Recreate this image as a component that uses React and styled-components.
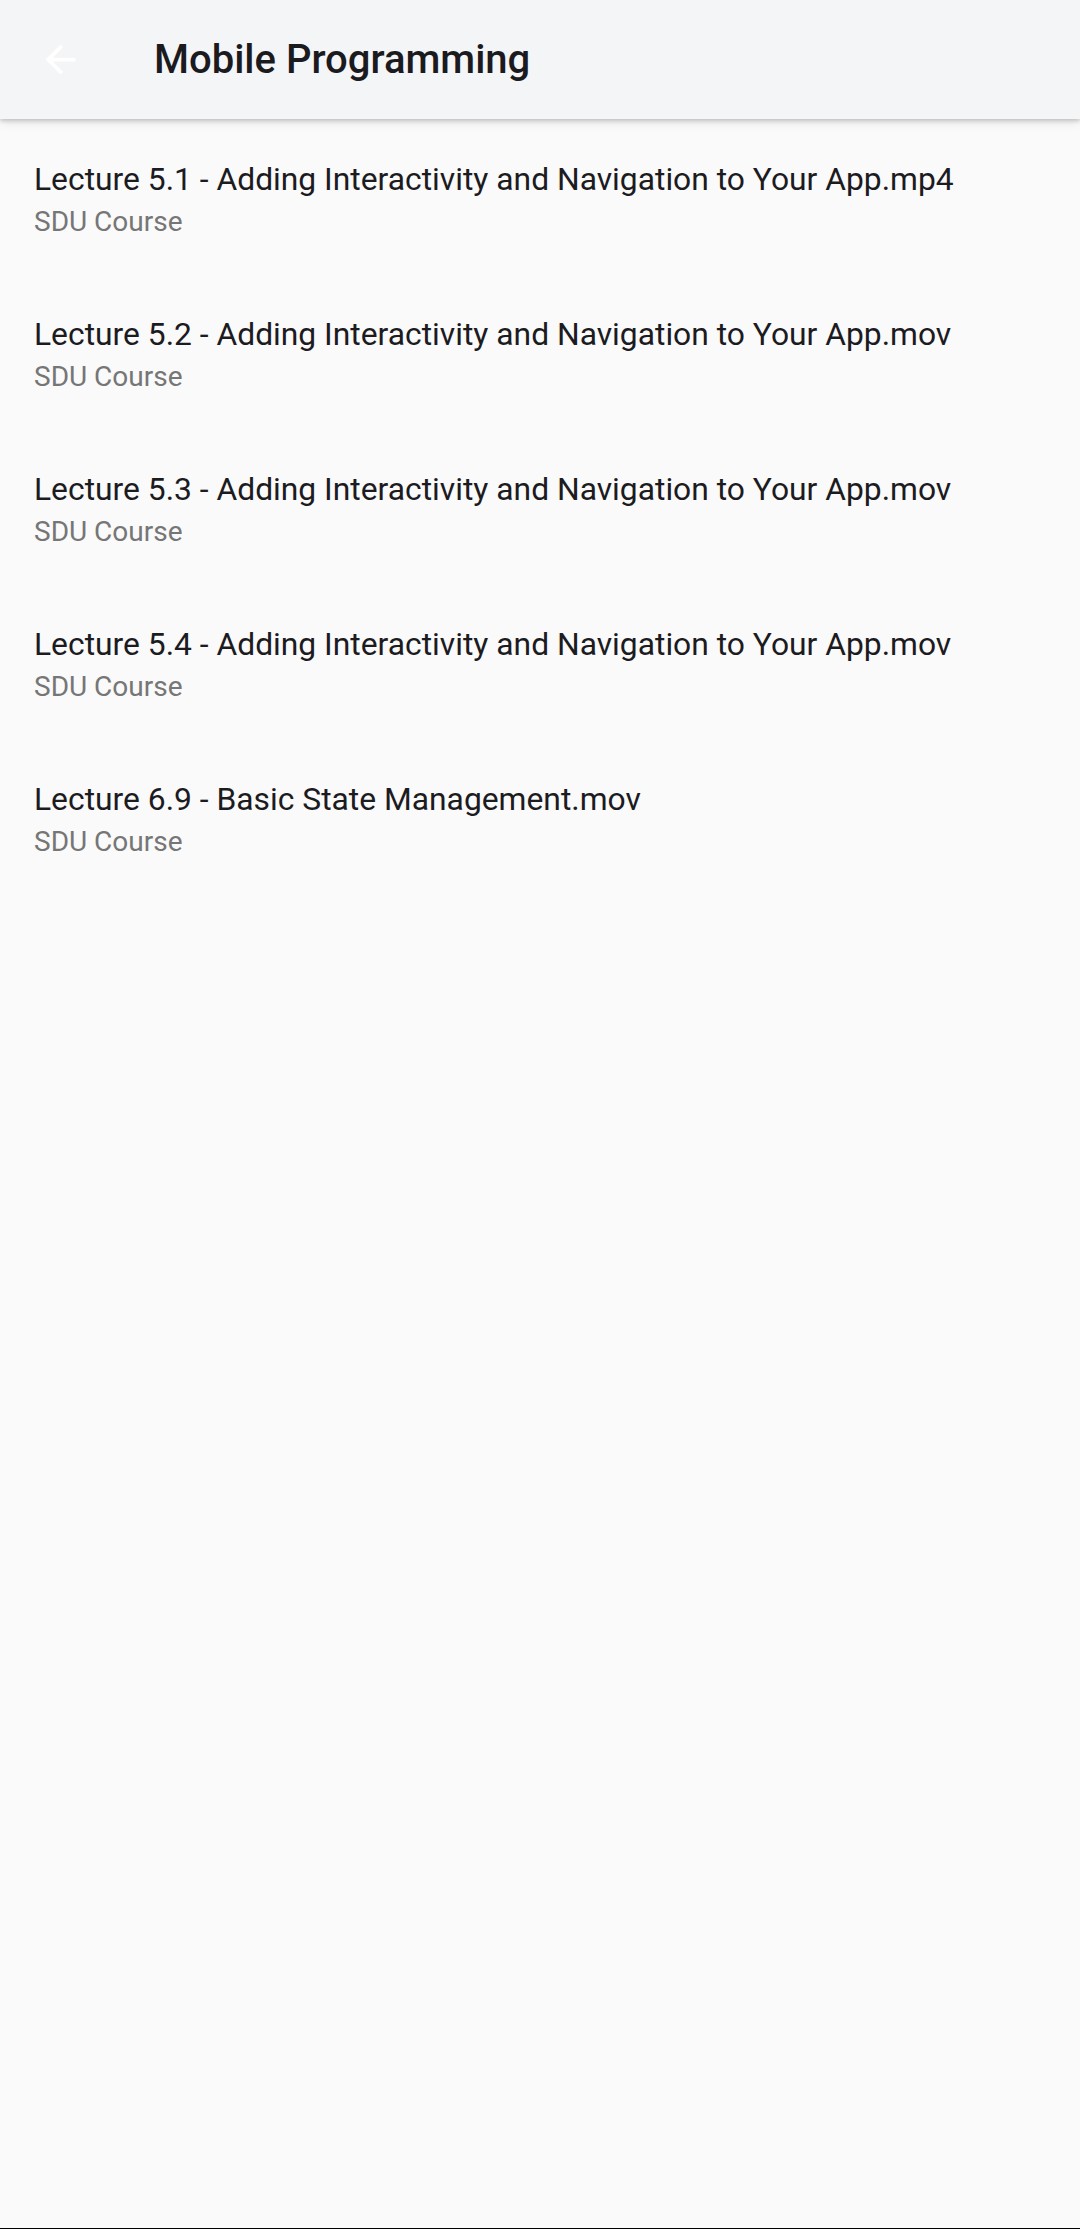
import React from "react";
import styled, { createGlobalStyle } from "styled-components";

const lectures = [
  "Lecture 5.1 - Adding Interactivity and Navigation to Your App.mp4",
  "Lecture 5.2 - Adding Interactivity and Navigation to Your App.mov",
  "Lecture 5.3 - Adding Interactivity and Navigation to Your App.mov",
  "Lecture 5.4 - Adding Interactivity and Navigation to Your App.mov",
  "Lecture 6.9 - Basic State Management.mov",
];

const GlobalStyle = createGlobalStyle`
  * { box-sizing: border-box; }
  body {
    margin: 0;
    background: #fafafa;
    font-family: Roboto, "Liberation Sans", sans-serif;
  }
`;

const Page = styled.div`
  min-height: 100vh;
  display: flex;
  flex-direction: column;
  background: #fafafa;
  border-bottom: 1px solid #000;
`;

const AppBar = styled.header`
  height: 119px;
  display: flex;
  align-items: center;
  background: #f4f5f7;
  box-shadow: 0 2px 4px rgba(0, 0, 0, 0.18), 0 4px 10px rgba(0, 0, 0, 0.08);
  position: relative;
  z-index: 1;
`;

const BackButton = styled.button`
  width: 120px;
  height: 119px;
  display: flex;
  align-items: center;
  justify-content: center;
  background: none;
  border: none;
  padding: 0;
  color: #ffffff;
  cursor: pointer;
`;

const Title = styled.h1`
  margin: 0 0 0 34px;
  font-size: 40px;
  font-weight: 500;
  color: #1b1b1f;
  letter-spacing: 0;
`;

const List = styled.ul`
  list-style: none;
  margin: 0;
  padding: 0;
`;

const Row = styled.li`
  height: 155px;
  padding: 4px 34px 0;
  display: flex;
  flex-direction: column;
  justify-content: center;
`;

const RowTitle = styled.div`
  font-size: 31.8px;
  line-height: 46px;
  color: #1c1b1f;
`;

const RowSubtitle = styled.div`
  font-size: 28px;
  line-height: 40px;
  color: #767676;
`;

const ArrowBack = () => (
  <svg width="45" height="45" viewBox="0 0 24 24" fill="currentColor">
    <path d="M20 11H7.83l5.59-5.59L12 4l-8 8 8 8 1.41-1.41L7.83 13H20v-2z" />
  </svg>
);

export default function App() {
  return (
    <Page>
      <GlobalStyle />
      <AppBar>
        <BackButton aria-label="Back">
          <ArrowBack />
        </BackButton>
        <Title>Mobile Programming</Title>
      </AppBar>
      <List>
        {lectures.map((name) => (
          <Row key={name}>
            <RowTitle>{name}</RowTitle>
            <RowSubtitle>SDU Course</RowSubtitle>
          </Row>
        ))}
      </List>
    </Page>
  );
}
